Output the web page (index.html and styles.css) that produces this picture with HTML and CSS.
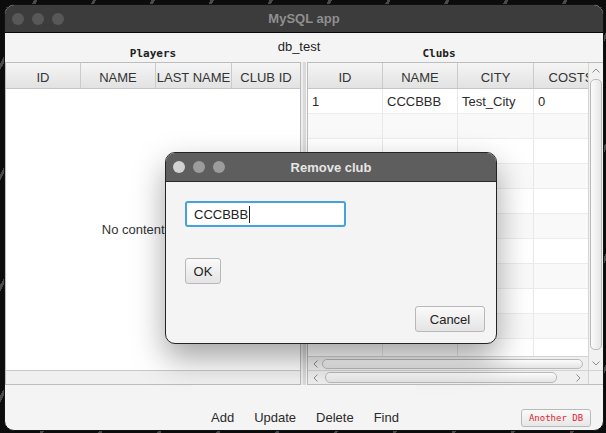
FILE: index.html
```html
<!DOCTYPE html>
<html>
<head>
<meta charset="utf-8">
<title>MySQL app</title>
<link rel="stylesheet" href="styles.css">
</head>
<body>
<div class="window">
  <div class="titlebar">
    <div class="lights"><span></span><span></span><span></span></div>
    <div class="title">MySQL app</div>
  </div>
  <div class="content">
    <div class="labels">
      <div class="dbname">db_test</div>
      <div class="pane-label left-label">Players</div>
      <div class="pane-label right-label">Clubs</div>
    </div>
    <div class="split">
      <div class="ptable">
        <div class="thead">
          <div class="th">ID</div>
          <div class="th">NAME</div>
          <div class="th w76">LAST NAME</div>
          <div class="th last">CLUB ID</div>
        </div>
        <div class="empty">No content in table</div>
        <div class="strip"></div>
      </div>
      <div class="divider"></div>
      <div class="ctable">
        <div class="cmain">
          <div class="thead">
            <div class="th">ID</div>
            <div class="th">NAME</div>
            <div class="th w76">CITY</div>
            <div class="th">COSTS</div>
          </div>
          <div class="rows">
            <div class="row"><div class="td">1</div><div class="td">CCCBBB</div><div class="td w76">Test_City</div><div class="td">0</div></div>
            <div class="row"><div class="td"></div><div class="td"></div><div class="td w76"></div><div class="td"></div></div>
            <div class="row"><div class="td"></div><div class="td"></div><div class="td w76"></div><div class="td"></div></div>
            <div class="row"><div class="td"></div><div class="td"></div><div class="td w76"></div><div class="td"></div></div>
            <div class="row"><div class="td"></div><div class="td"></div><div class="td w76"></div><div class="td"></div></div>
            <div class="row"><div class="td"></div><div class="td"></div><div class="td w76"></div><div class="td"></div></div>
            <div class="row"><div class="td"></div><div class="td"></div><div class="td w76"></div><div class="td"></div></div>
            <div class="row"><div class="td"></div><div class="td"></div><div class="td w76"></div><div class="td"></div></div>
            <div class="row"><div class="td"></div><div class="td"></div><div class="td w76"></div><div class="td"></div></div>
            <div class="row"><div class="td"></div><div class="td"></div><div class="td w76"></div><div class="td"></div></div>
            <div class="row"><div class="td"></div><div class="td"></div><div class="td w76"></div><div class="td"></div></div>
          </div>
        </div>
        <div class="vscroll">
          <div class="arr"><svg width="8" height="5" viewBox="0 0 8 5"><path d="M0.5 4.5 L4 1 L7.5 4.5" fill="none" stroke="#8c8c8c" stroke-width="1"/></svg></div>
          <div class="vthumb"></div>
          <div class="arr"><svg width="8" height="5" viewBox="0 0 8 5"><path d="M0.5 0.5 L4 4 L7.5 0.5" fill="none" stroke="#8c8c8c" stroke-width="1"/></svg></div>
        </div>
        <div class="hscroll h1">
          <div class="arr"><svg width="5" height="8" viewBox="0 0 5 8"><path d="M4.5 0.5 L1 4 L4.5 7.5" fill="none" stroke="#8c8c8c" stroke-width="1"/></svg></div>
          <div class="hthumb t1"></div>
        </div>
        <div class="hscroll h2">
          <div class="arr"><svg width="5" height="8" viewBox="0 0 5 8"><path d="M4.5 0.5 L1 4 L4.5 7.5" fill="none" stroke="#8c8c8c" stroke-width="1"/></svg></div>
          <div class="hthumb t2"></div>
          <div class="arr"><svg width="5" height="8" viewBox="0 0 5 8"><path d="M0.5 0.5 L4 4 L0.5 7.5" fill="none" stroke="#8c8c8c" stroke-width="1"/></svg></div>
        </div>
        <div class="corner"></div>
      </div>
    </div>
    <div class="footer">
      <div class="toolbar">
        <button class="tb">Add</button>
        <button class="tb">Update</button>
        <button class="tb">Delete</button>
        <button class="tb">Find</button>
      </div>
      <button class="another">Another DB</button>
    </div>
  </div>
</div>

<div class="dialog">
  <div class="dtitle">
    <div class="dlights"><span class="l1"></span><span></span><span></span></div>
    <div class="dtext">Remove club</div>
  </div>
  <div class="dbody">
    <div class="field">CCCBBB<span class="caret"></span></div>
    <button class="btn ok">OK</button>
    <button class="btn cancel">Cancel</button>
  </div>
</div>
</body>
</html>
```

FILE: styles.css
```css
* { box-sizing: border-box; }

html, body {
  margin: 0;
  height: 100%;
}

body {
  width: 606px;
  height: 433px;
  overflow: hidden;
  padding: 4px 2px 2px 4px;
  background: #0c0c0c repeating-linear-gradient(118deg, #0c0c0c 0 30px, #4a4a4a 30px 33px, #0c0c0c 33px 52px);
  font-family: "Liberation Sans", Arial, sans-serif;
  font-size: 13px;
  color: #2b2b2b;
}

/* main window */
.window {
  width: 600px;
  height: 427px;
  border: 1px solid #111;
  border-radius: 10px;
  overflow: hidden;
  display: flex;
  flex-direction: column;
  background: #f4f4f4;
}

.titlebar {
  flex: none;
  height: 28px;
  background: #3c3c3c;
  border-bottom: 1px solid #080808;
  display: grid;
  grid-template-columns: 1fr auto 1fr;
  align-items: center;
}

.lights {
  display: flex;
  gap: 8px;
  padding-left: 7px;
}

.lights span {
  width: 12px;
  height: 12px;
  border-radius: 50%;
  background: #585858;
}

.title {
  font-weight: bold;
  font-size: 13px;
  color: #8f8f8f;
}

.content {
  flex: 1;
  display: flex;
  flex-direction: column;
}

.labels {
  flex: none;
  height: 29px;
  display: grid;
  grid-template-columns: 296px 6px 296px;
}

.dbname {
  grid-row: 1;
  grid-column: 1 / 4;
  justify-self: center;
  align-self: start;
  margin-top: 6px;
  margin-right: 10px;
  line-height: 15px;
  color: #1e1e1e;
}

.pane-label {
  grid-row: 1;
  align-self: end;
  margin-bottom: 2px;
  text-align: center;
  font-family: "DejaVu Sans Mono", "Liberation Mono", monospace;
  font-weight: bold;
  font-size: 11px;
  line-height: 13px;
  color: #202020;
}

.left-label { grid-column: 1; }
.right-label { grid-column: 3; padding-right: 32px; }

.split {
  flex: none;
  height: 323px;
  display: flex;
}

/* tables */
.thead {
  flex: none;
  display: flex;
  height: 26px;
  border-bottom: 1px solid #c6c6c6;
  background: linear-gradient(#f5f5f5, #e2e2e2);
}

.th {
  flex: none;
  width: 75px;
  border-right: 1px solid #cbcbcb;
  display: flex;
  align-items: center;
  justify-content: center;
  padding-top: 4px;
  line-height: 15px;
  white-space: nowrap;
  overflow: hidden;
  color: #333;
}

.th.w76, .td.w76 { width: 76px; }
.th.last { flex: 1; border-right: 0; }

.ptable {
  width: 296px;
  flex: none;
  border: 1px solid #bcbcbc;
  display: flex;
  flex-direction: column;
  background: #fff;
}

.empty {
  flex: 1;
  display: flex;
  align-items: center;
  justify-content: center;
  padding-left: 6px;
  color: #333;
}

.strip {
  flex: none;
  height: 14px;
  border-top: 1px solid #c8c8c8;
  background: #f0f0f0;
}

.divider {
  flex: none;
  width: 6px;
  background: linear-gradient(to right, #ededed 0 2px, #dadada 2px 5px, #f7f7f7 5px);
}

.ctable {
  width: 296px;
  flex: none;
  border: 1px solid #bcbcbc;
  border-right: 0;
  display: grid;
  grid-template-columns: 280px 15px;
  grid-template-rows: 1fr 14px 14px;
  background: #f0f0f0;
}

.cmain {
  grid-row: 1;
  grid-column: 1;
  display: flex;
  flex-direction: column;
  overflow: hidden;
  background: #fff;
}

.cmain .thead { width: 301px; }

.rows {
  flex: 1;
  overflow: hidden;
}

.row {
  display: flex;
  height: 25px;
  border-bottom: 1px solid #ececec;
}

.row:nth-child(even) { background: #f9f9f9; }

.td {
  flex: none;
  width: 75px;
  border-right: 1px solid #e8e8e8;
  padding: 1px 0 0 4px;
  line-height: 23px;
  color: #2b2b2b;
  white-space: nowrap;
}

/* scrollbars */
.arr {
  flex: none;
  width: 14px;
  height: 14px;
  display: flex;
  align-items: center;
  justify-content: center;
}

.vscroll {
  grid-row: 1 / 3;
  grid-column: 2;
  display: flex;
  flex-direction: column;
  border-left: 1px solid #d6d6d6;
  background: #f1f1f1;
}

.vthumb {
  flex: 1;
  margin: 2px 1px 6px 1px;
  border: 1px solid #b9b9b9;
  border-radius: 5px;
  background: linear-gradient(to right, #fbfbfb, #e6e6e6);
}

.hscroll {
  grid-column: 1;
  display: flex;
  align-items: center;
  border-top: 1px solid #d2d2d2;
  background: #efefef;
}

.h1 { grid-row: 2; }
.h2 { grid-row: 3; padding-right: 3px; }

.hthumb {
  flex: 1;
  border: 1px solid #b9b9b9;
  border-radius: 5px;
  background: linear-gradient(#fbfbfb, #e4e4e4);
}

.t1 { height: 10px; margin-right: 5px; }
.t2 { height: 11px; margin: 0 14px 0 3px; }

.corner {
  grid-row: 3;
  grid-column: 2;
  border-left: 1px solid #d2d2d2;
  border-top: 1px solid #d2d2d2;
  background: #f1f1f1;
}

/* footer */
.footer {
  flex: 1;
  display: grid;
  grid-template-columns: 1fr auto 1fr;
}

.toolbar {
  grid-column: 2;
  display: flex;
  gap: 20px;
  padding: 19px 17px 0 19px;
  background: #f4f4f4;
  position: relative;
  z-index: 3;
}

.tb {
  font-family: "Liberation Sans", Arial, sans-serif;
  font-size: 13px;
  line-height: 15px;
  padding: 6px 0;
  margin: 0;
  border: 0;
  background: none;
  color: #2a2a2a;
  height: 27px;
}

.another {
  grid-column: 3;
  justify-self: end;
  align-self: start;
  margin: 24px 12px 0 0;
  width: 70px;
  height: 18px;
  padding: 0;
  border: 1px solid #b9b9b9;
  border-radius: 3px;
  background: linear-gradient(#fafafa, #e7e7e7);
  font-family: "DejaVu Sans Mono", "Liberation Mono", monospace;
  font-size: 9px;
  line-height: 16px;
  color: #e3242e;
}

/* dialog */
.dialog {
  position: absolute;
  left: 165px;
  top: 152px;
  width: 332px;
  height: 192px;
  border: 1px solid #242424;
  border-radius: 10px;
  overflow: hidden;
  background: #f4f4f4;
  box-shadow: 0 14px 32px rgba(0, 0, 0, 0.36);
  z-index: 2;
  display: flex;
  flex-direction: column;
}

.dtitle {
  flex: none;
  height: 29px;
  background: #5e5e5e;
  border-bottom: 1px solid #2a2a2a;
  display: grid;
  grid-template-columns: 1fr auto 1fr;
  align-items: center;
}

.dlights {
  display: flex;
  gap: 8px;
  padding-left: 7px;
}

.dlights span {
  width: 12px;
  height: 12px;
  border-radius: 50%;
  background: #9c9c9c;
}

.dlights .l1 { background: #d2d2d2; }

.dtext {
  font-weight: bold;
  font-size: 13px;
  color: #e6e6e6;
}

.dbody {
  flex: 1;
  display: flex;
  flex-direction: column;
  align-items: flex-start;
  padding: 19px 11px 11px 19px;
}

.field {
  width: 161px;
  height: 26px;
  border: 2px solid #44a2dc;
  border-radius: 3px;
  background: #fff;
  padding-left: 7px;
  display: flex;
  align-items: center;
  color: #222;
  line-height: 15px;
}

.caret {
  display: inline-block;
  width: 1px;
  height: 17px;
  margin-left: 1px;
  background: #222;
}

.btn {
  height: 26px;
  padding: 0;
  border: 1px solid #b8b8b8;
  border-radius: 3px;
  background: linear-gradient(#fafafa, #e4e4e4);
  font-family: "Liberation Sans", Arial, sans-serif;
  font-size: 13px;
  color: #222;
}

.ok {
  width: 36px;
  margin-top: 31px;
}

.cancel {
  width: 70px;
  margin-top: auto;
  align-self: flex-end;
}
```
